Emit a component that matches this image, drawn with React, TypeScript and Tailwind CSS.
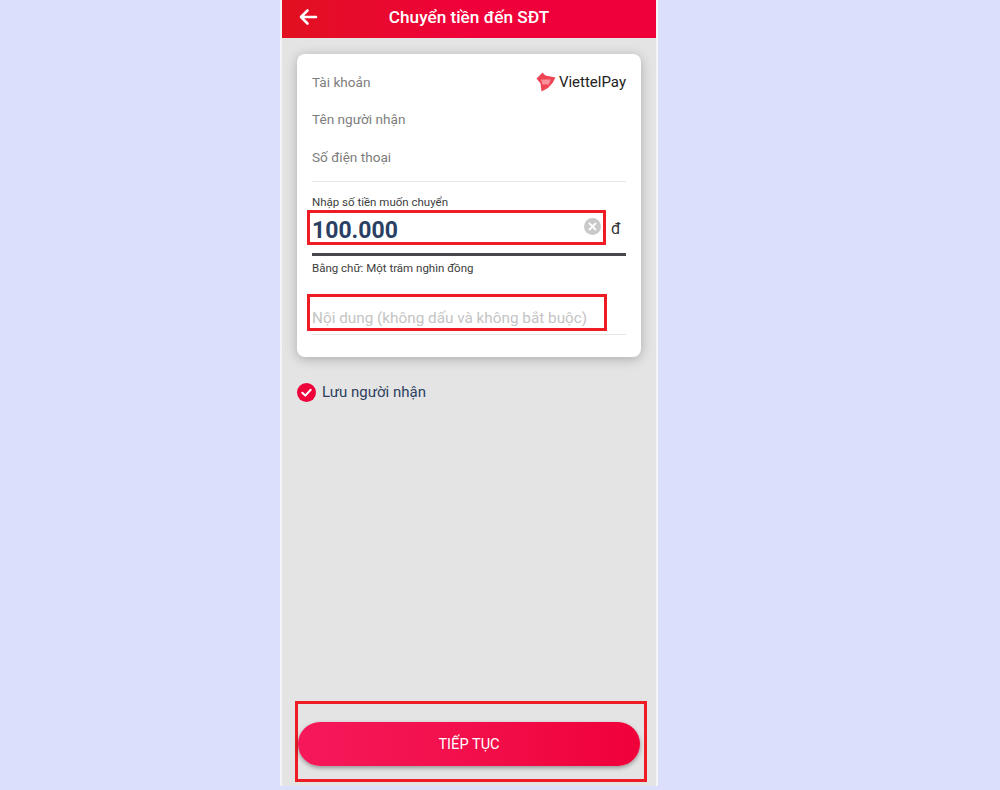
import React from "react";

function Logo() {
  return (
    <svg width="20" height="20" viewBox="0 0 20 20" className="shrink-0">
      <path d="M0.5 6.5 L6.5 0.5 L9.5 3.5 L19.5 5.5 L16.5 11 L12 16 L5.5 19.5 L4.5 11.5 Z" fill="#ef4453" />
      <path d="M5 7.5 L14.5 7.5 L13 12.5 L6.5 12.5 Z" fill="#f9919a" />
    </svg>
  );
}

export default function App() {
  return (
    <div className="h-[790px] w-full bg-[#dcdffb] font-['Roboto',sans-serif]">
      <div className="ml-[280px] h-[786px] w-[378px] border-x-2 border-[#f4f4f8] bg-[#e4e4e4] flex flex-col">
        <header className="h-[38px] shrink-0 relative flex items-center justify-center bg-gradient-to-r from-[#e1101f] via-[#f0003a] to-[#f0003a]">
          <svg width="20" height="18" viewBox="0 0 20 18" className="absolute left-[16px] top-[8px]" fill="none" stroke="#ffffff" strokeWidth="2.6" strokeLinecap="round" strokeLinejoin="round">
            <path d="M18 9 H3 M9.5 2.5 L3 9 L9.5 15.5" />
          </svg>
          <h1 className="text-[17.2px] leading-[20px] font-medium text-white -mt-[4px]">Chuyển tiền đến SĐT</h1>
        </header>

        <main className="flex-1 flex flex-col pl-[15px] pr-[15px] pt-[16px]">
          <section className="h-[303px] w-[344px] shrink-0 rounded-[8px] bg-white px-[15px] shadow-[0_2px_12px_rgba(0,0,0,0.25)] flex flex-col text-[13.6px] text-[#7d7d7d]">
            <div className="h-[20px] mt-[18px] flex items-center justify-between">
              <span>Tài khoản</span>
              <span className="flex items-center gap-[3px] text-[15px] text-[#222222]">
                <Logo />
                ViettelPay
              </span>
            </div>
            <div className="h-[20px] mt-[17px] flex items-center">Tên người nhận</div>
            <div className="h-[20px] mt-[18px] flex items-center">Số điện thoại</div>
            <div className="h-px mt-[14px] bg-[#e6e6e6]" />
            <div className="mt-[13px] text-[11.5px] leading-[14px] text-[#3d3d3d]">Nhập số tiền muốn chuyển</div>

            <div className="relative mt-[2px] h-[36px] flex items-center">
              <span className="text-[23px] font-bold text-[#2a3f63] mt-[5px]">100.000</span>
              <svg width="17" height="17" viewBox="0 0 17 17" className="absolute left-[272px] top-[7px]">
                <circle cx="8.5" cy="8.5" r="8.5" fill="#c9c9c9" />
                <path d="M5.5 5.5 L11.5 11.5 M11.5 5.5 L5.5 11.5" stroke="#ffffff" strokeWidth="1.8" strokeLinecap="round" />
              </svg>
              <span className="absolute left-[299px] top-[6px] text-[16px] text-[#333333]">đ</span>
              <div className="absolute -left-[5px] -top-[1px] h-[35px] w-[299px] border-[3px] border-[#ee1c25]" />
            </div>
            <div className="h-[3px] mt-[6px] bg-[#47474c]" />
            <div className="mt-[5px] text-[11.5px] leading-[14px] text-[#3d3d3d]">Bằng chữ: Một trăm nghìn đồng</div>

            <div className="relative mt-[19px] h-[37px] flex items-end">
              <span className="text-[15.3px] leading-[20px] text-[#c4c4c4] mb-[3px]">Nội dung (không dấu và không bắt buộc)</span>
              <div className="absolute -left-[5px] top-0 h-[37px] w-[300px] border-[3px] border-[#ee1c25]" />
            </div>
            <div className="h-px mt-[3px] bg-[#e6e6e6]" />
          </section>

          <div className="mt-[25px] flex items-center gap-[6px]">
            <svg width="19" height="19" viewBox="0 0 19 19" className="shrink-0">
              <circle cx="9.5" cy="9.5" r="9.5" fill="#f0003a" />
              <path d="M5.3 9.8 L8.3 12.6 L13.7 6.8" fill="none" stroke="#ffffff" strokeWidth="2" strokeLinecap="round" strokeLinejoin="round" />
            </svg>
            <span className="text-[15px] leading-[20px] text-[#2d3f5e]">Lưu người nhận</span>
          </div>

          <div className="relative mt-auto mb-[4px] h-[81px] w-[352px] -ml-[2px] border-[3px] border-[#ee1c25] flex items-center justify-start">
            <button className="w-[342px] h-[44px] mt-[4px] pt-[2px] rounded-full bg-gradient-to-r from-[#f5185a] to-[#f0003a] text-white text-[14.6px] shadow-[0_2px_4px_rgba(0,0,0,0.35)]">
              TIẾP TỤC
            </button>
          </div>
        </main>
      </div>
    </div>
  );
}
